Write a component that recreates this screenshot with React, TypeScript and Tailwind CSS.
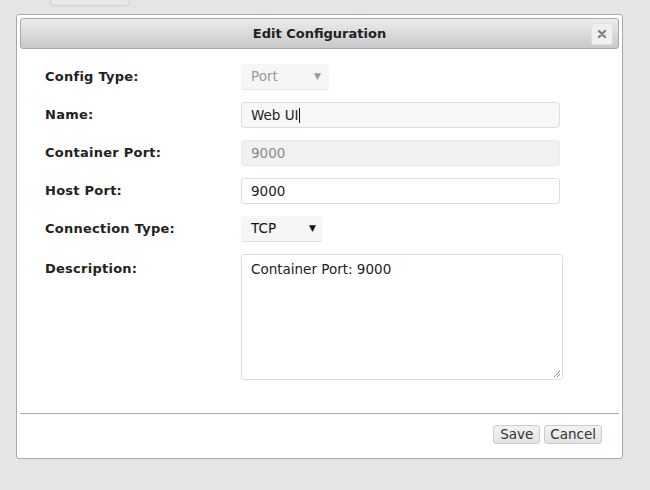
import React from "react";

const font = { fontFamily: '"DejaVu Sans", Verdana, sans-serif' };

function Row({ label, children, tall }: { label: string; children: React.ReactNode; tall?: boolean }) {
  return (
    <div className={`flex ${tall ? "items-start" : "items-center"} h-auto mb-[12px]`}>
      <div className={`w-[221px] shrink-0 pl-[25px] text-[13px] tracking-[0.25px] font-bold text-[#222] ${tall ? "pt-[5px]" : ""}`}>{label}</div>
      {children}
    </div>
  );
}

export default function App() {
  return (
    <div className="w-[650px] h-[490px] bg-[#e5e5e5] overflow-hidden" style={font}>
      <div className="ml-[50px] w-[80px] h-[6px] bg-[#e9e9e9] border-b border-x border-[#cfcfcf] rounded-b-[4px]" />
      <div className="ml-[16px] mt-[8px] w-[607px] h-[445px] bg-white border border-[#aaaaaa] rounded-[3px] p-[3px] flex flex-col">
        <div className="relative h-[31px] border border-[#aaaaaa] rounded-[3px] bg-gradient-to-b from-[#ececec] to-[#c9c9c9] flex items-center justify-center">
          <span className="text-[13px] font-bold text-[#222]">Edit Configuration</span>
          <div className="absolute right-[5px] top-[4px] w-[22px] h-[22px] rounded-[3px] bg-[#f0f0f0] border border-[#e0e0e0] flex items-center justify-center">
            <svg width="10" height="10" viewBox="0 0 10 10">
              <path d="M2 2 L8 8 M8 2 L2 8" stroke="#808080" strokeWidth="2.4" strokeLinecap="round" />
            </svg>
          </div>
        </div>
        <div className="pt-[15px]">
          <Row label="Config Type:">
            <div className="w-[88px] h-[26px] bg-[#f6f6f6] rounded-[3px] border-b border-[#e6e6e6] flex items-center justify-between pl-[10px] pr-[8px] text-[13.5px] text-[#999]">
              <span>Port</span>
              <span className="text-[9px] text-[#999]">▼</span>
            </div>
          </Row>
          <Row label="Name:">
            <div className="w-[319px] h-[26px] bg-[#f7f7f7] border border-[#dddddd] rounded-[3px] flex items-center pl-[9px] text-[13.5px] text-[#222]">
              <span>Web UI</span>
              <span className="w-[1px] h-[15px] bg-[#111]" />
            </div>
          </Row>
          <Row label="Container Port:">
            <div className="w-[319px] h-[26px] bg-[#f1f1f1] border border-[#eaeaea] rounded-[3px] flex items-center pl-[9px] text-[13.5px] text-[#8a8a8a]">
              9000
            </div>
          </Row>
          <Row label="Host Port:">
            <div className="w-[319px] h-[26px] bg-white border border-[#dddddd] rounded-[3px] flex items-center pl-[9px] text-[13.5px] text-[#222]">
              9000
            </div>
          </Row>
          <Row label="Connection Type:">
            <div className="w-[81px] h-[26px] bg-[#f6f6f6] rounded-[3px] border-b border-[#e0e0e0] flex items-center justify-between pl-[10px] pr-[6px] text-[13.5px] text-[#111]">
              <span>TCP</span>
              <span className="text-[9px] text-[#111]">▼</span>
            </div>
          </Row>
          <Row label="Description:" tall>
            <div className="relative w-[322px] h-[126px] bg-white border border-[#dddddd] rounded-[3px] pl-[9px] pt-[4px] text-[13.5px] text-[#222]">
              Container Port: 9000
              <svg className="absolute right-[1px] bottom-[1px]" width="9" height="9" viewBox="0 0 9 9">
                <path d="M8 2 L2 8 M8 5 L5 8" stroke="#888" strokeWidth="1" />
              </svg>
            </div>
          </Row>
        </div>
        <div className="mt-[21px] border-t border-[#aaaaaa]" />
        <div className="flex justify-end gap-[4px] pt-[11px] pr-[17px]">
          <button className="h-[19px] px-[6px] bg-gradient-to-b from-[#f3f3f3] to-[#e3e3e3] border border-[#cccccc] rounded-[3px] text-[13.5px] text-[#333] leading-none">Save</button>
          <button className="h-[19px] px-[5px] bg-gradient-to-b from-[#f3f3f3] to-[#e3e3e3] border border-[#cccccc] rounded-[3px] text-[13.5px] text-[#333] leading-none">Cancel</button>
        </div>
      </div>
    </div>
  );
}
